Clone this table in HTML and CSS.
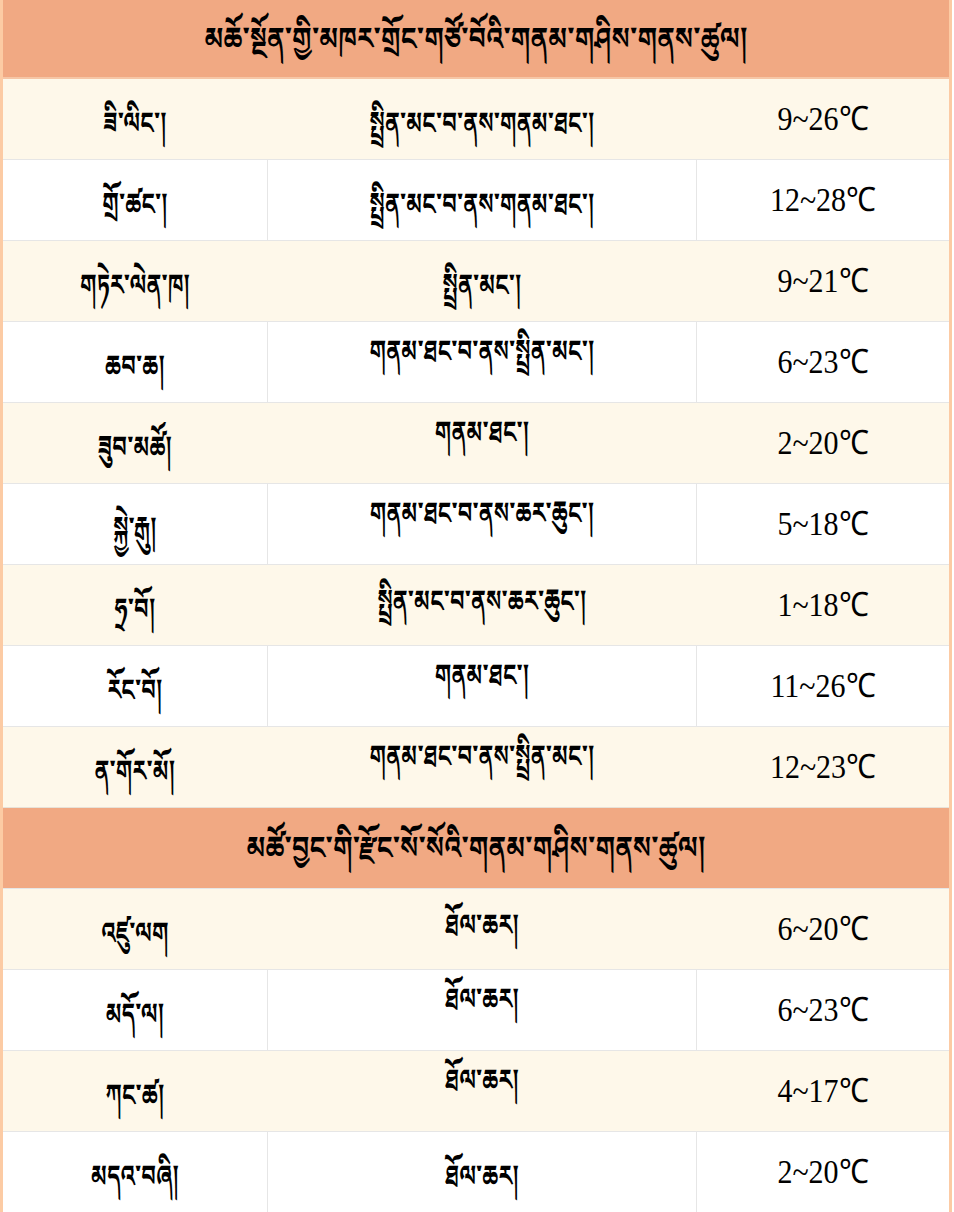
FILE: index.html
```html
<!DOCTYPE html>
<html>
<head>
<meta charset="utf-8">
<link rel="stylesheet" href="styles.css">
</head>
<body>
<div class="sheet">
  <div class="head first"><span class="t">མཆོ་སྔོན་གྱི་མཁར་གྲོང་གཙོ་བོའི་གནམ་གཤིས་གནས་ཚུལ།</span></div>
  <div class="row cream"><div class="c1"><span class="t">ཟི་ལིང་།</span></div><div class="c2"><span class="t">སྤྲིན་མང་བ་ནས་གནམ་ཐང་།</span></div><div class="c3"><span class="n">9~26℃</span></div></div>
  <div class="row white"><div class="c1"><span class="t">གྲོ་ཚང་།</span></div><div class="c2"><span class="t">སྤྲིན་མང་བ་ནས་གནམ་ཐང་།</span></div><div class="c3"><span class="n">12~28℃</span></div></div>
  <div class="row cream"><div class="c1"><span class="t">གཏེར་ལེན་ཁ།</span></div><div class="c2"><span class="t">སྤྲིན་མང་།</span></div><div class="c3"><span class="n">9~21℃</span></div></div>
  <div class="row white"><div class="c1"><span class="t">ཆབ་ཆ།</span></div><div class="c2 up"><span class="t">གནམ་ཐང་བ་ནས་སྤྲིན་མང་།</span></div><div class="c3"><span class="n">6~23℃</span></div></div>
  <div class="row cream"><div class="c1"><span class="t">ཟུབ་མཚོ།</span></div><div class="c2 up"><span class="t">གནམ་ཐང་།</span></div><div class="c3"><span class="n">2~20℃</span></div></div>
  <div class="row white"><div class="c1"><span class="t">སྐྱེ་རྒུ།</span></div><div class="c2 up"><span class="t">གནམ་ཐང་བ་ནས་ཆར་ཆུང་།</span></div><div class="c3"><span class="n">5~18℃</span></div></div>
  <div class="row cream"><div class="c1"><span class="t">ཧྲ་བོ།</span></div><div class="c2 mid"><span class="t">སྤྲིན་མང་བ་ནས་ཆར་ཆུང་།</span></div><div class="c3"><span class="n">1~18℃</span></div></div>
  <div class="row white"><div class="c1"><span class="t">རོང་བོ།</span></div><div class="c2 up"><span class="t">གནམ་ཐང་།</span></div><div class="c3"><span class="n">11~26℃</span></div></div>
  <div class="row cream"><div class="c1"><span class="t">ན་གོར་མོ།</span></div><div class="c2 up"><span class="t">གནམ་ཐང་བ་ནས་སྤྲིན་མང་།</span></div><div class="c3"><span class="n">12~23℃</span></div></div>
  <div class="head second"><span class="t">མཚོ་བྱང་གི་རྫོང་སོ་སོའི་གནམ་གཤིས་གནས་ཚུལ།</span></div>
  <div class="row cream"><div class="c1"><span class="t">འཛུ་ལག</span></div><div class="c2 mid"><span class="t">ཐོལ་ཆར།</span></div><div class="c3"><span class="n">6~20℃</span></div></div>
  <div class="row white"><div class="c1"><span class="t">མདོ་ལ།</span></div><div class="c2 up"><span class="t">ཐོལ་ཆར།</span></div><div class="c3"><span class="n">6~23℃</span></div></div>
  <div class="row cream"><div class="c1"><span class="t">ཀང་ཚ།</span></div><div class="c2 up"><span class="t">ཐོལ་ཆར།</span></div><div class="c3"><span class="n">4~17℃</span></div></div>
  <div class="row white"><div class="c1"><span class="t">མདའ་བཞི།</span></div><div class="c2"><span class="t">ཐོལ་ཆར།</span></div><div class="c3"><span class="n">2~20℃</span></div></div>
</div>
</body>
</html>
```
FILE: styles.css
```css
html, body {
  margin: 0;
  padding: 0;
  background: #ffffff;
}
.sheet {
  width: 946px;
  border-left: 3px solid #fccba4;
  border-right: 3px solid #fccba4;
  border-bottom: 3px solid #fccba4;
  font-family: "Liberation Serif", "Noto Serif Tibetan", "Jomolhari", "Microsoft Himalaya", serif;
  color: #000;
}
.t {
  display: inline-block;
  font-size: 22px;
  font-weight: bold;
  line-height: 1.3;
  transform: scaleY(1.36);
  white-space: nowrap;
}
.n {
  display: inline-block;
  font-size: 30px;
  line-height: 1;
  transform: scaleY(1.12);
  white-space: nowrap;
}
.head {
  background: #f1a983;
  display: flex;
  align-items: center;
  justify-content: center;
  box-sizing: border-box;
}
.head .t {
  font-size: 26px;
  transform: scaleY(1.2);
}
.head.first {
  height: 79px;
  border-bottom: 2px solid #f6c6a6;
}
.head.second {
  height: 81px;
  border-top: 1px solid #e8e2d8;
}
.row {
  display: grid;
  grid-template-columns: 264px 430px 252px;
  height: 81px;
  box-sizing: border-box;
  border-top: 1px solid #e6e6e6;
}
.head.first + .row { border-top: none; height: 80px; }
.row.cream { background: #fef8ea; }
.row.white { background: #ffffff; }
.row > div {
  display: flex;
  align-items: center;
  justify-content: center;
  box-sizing: border-box;
}
.row.white .c2 {
  border-left: 1px solid #e6e6e6;
  border-right: 1px solid #e6e6e6;
}
.row .c1, .row .c2 { padding-top: 10px; }
.row .c2.mid { padding-top: 0; padding-bottom: 6px; }
.row .c2.up { padding-top: 0; padding-bottom: 20px; }
```
